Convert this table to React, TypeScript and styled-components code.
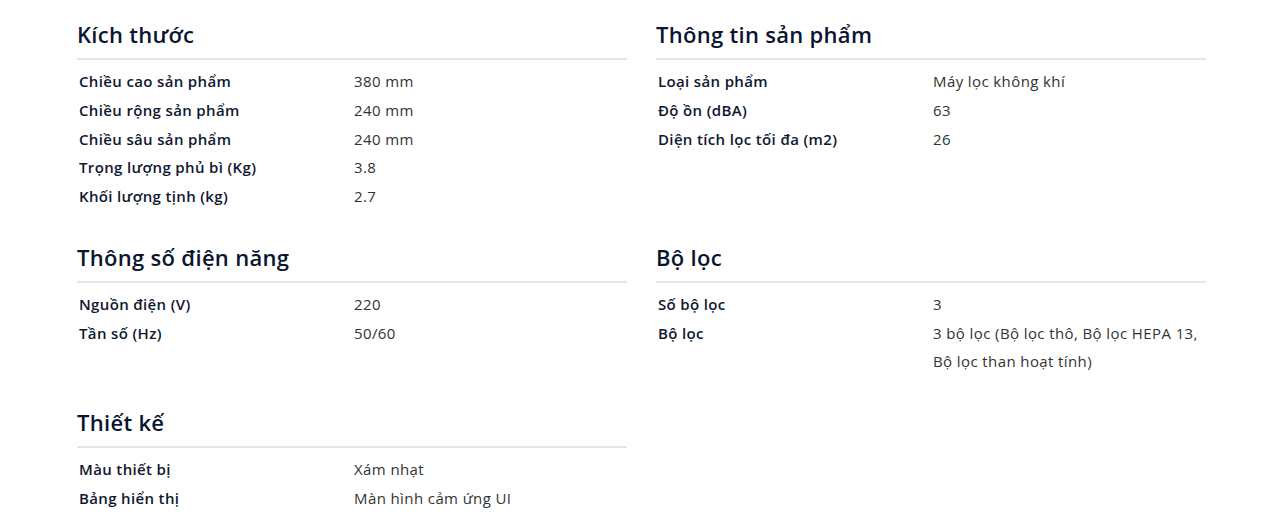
import React from "react";
import styled, { createGlobalStyle } from "styled-components";

const GlobalStyle = createGlobalStyle`
  html, body { margin: 0; padding: 0; background: #ffffff; }
  body { font-family: "Open Sans", Lato, Arial, sans-serif; }
`;

const Page = styled.div`
  width: 1130px;
  margin: 0 auto;
  padding: 19px 0 0 4px;
  display: grid;
  grid-template-columns: 550px 550px;
  column-gap: 29px;
  row-gap: 31px;
  align-items: start;
`;

const Section = styled.section`
  display: flex;
  flex-direction: column;
`;

const Heading = styled.h2`
  margin: 0;
  font-size: 22px;
  line-height: 30px;
  font-weight: 600;
  letter-spacing: 0.3px;
  color: #0a1530;
  padding-bottom: 9px;
  border-bottom: 2px solid #e6e6e6;
  margin-bottom: 7px;
`;

const Rows = styled.dl`
  margin: 0;
  display: grid;
  grid-template-columns: 277px 1fr;
`;

const Label = styled.dt`
  margin: 0;
  padding-left: 2px;
  font-size: 15px;
  line-height: 28.75px;
  font-weight: 600;
  letter-spacing: 0.35px;
  color: #0f1830;
`;

const Value = styled.dd`
  margin: 0;
  font-size: 15px;
  line-height: 28.75px;
  font-weight: 400;
  letter-spacing: 0.4px;
  color: #333333;
  padding-right: 4px;
`;

type Spec = { title: string; rows: [string, string][] };

const specs: Spec[] = [
  {
    title: "Kích thước",
    rows: [
      ["Chiều cao sản phẩm", "380 mm"],
      ["Chiều rộng sản phẩm", "240 mm"],
      ["Chiều sâu sản phẩm", "240 mm"],
      ["Trọng lượng phủ bì (Kg)", "3.8"],
      ["Khối lượng tịnh (kg)", "2.7"],
    ],
  },
  {
    title: "Thông tin sản phẩm",
    rows: [
      ["Loại sản phẩm", "Máy lọc không khí"],
      ["Độ ồn (dBA)", "63"],
      ["Diện tích lọc tối đa (m2)", "26"],
    ],
  },
  {
    title: "Thông số điện năng",
    rows: [
      ["Nguồn điện (V)", "220"],
      ["Tần số (Hz)", "50/60"],
    ],
  },
  {
    title: "Bộ lọc",
    rows: [
      ["Số bộ lọc", "3"],
      ["Bộ lọc", "3 bộ lọc (Bộ lọc thô, Bộ lọc HEPA 13, Bộ lọc than hoạt tính)"],
    ],
  },
  {
    title: "Thiết kế",
    rows: [
      ["Màu thiết bị", "Xám nhạt"],
      ["Bảng hiển thị", "Màn hình cảm ứng UI"],
    ],
  },
];

export default function App() {
  return (
    <>
      <GlobalStyle />
      <Page>
        {specs.map((s) => (
          <Section key={s.title}>
            <Heading>{s.title}</Heading>
            <Rows>
              {s.rows.map(([k, v]) => (
                <React.Fragment key={k}>
                  <Label>{k}</Label>
                  <Value>{v}</Value>
                </React.Fragment>
              ))}
            </Rows>
          </Section>
        ))}
      </Page>
    </>
  );
}
